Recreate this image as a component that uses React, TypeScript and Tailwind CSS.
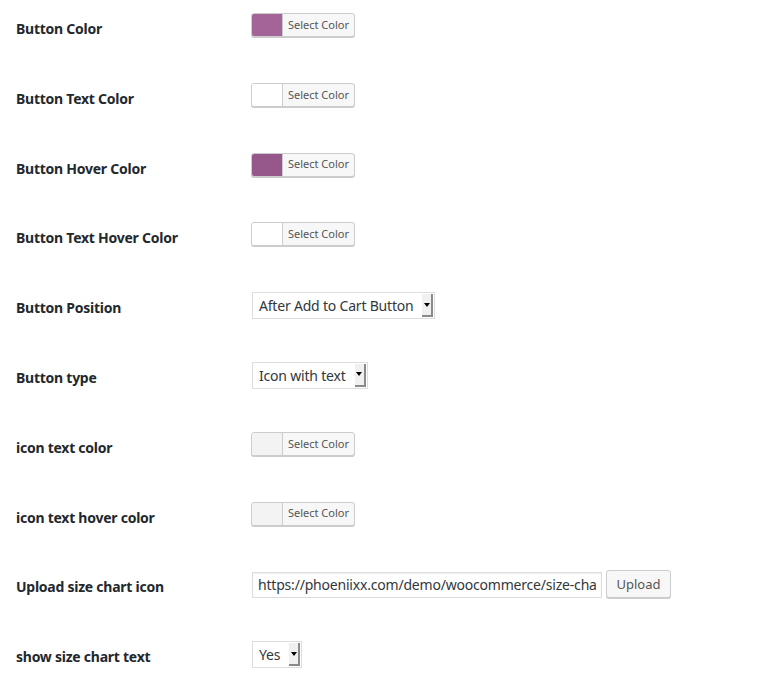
const labelFont = { fontFamily: '"Noto Sans", "Open Sans", sans-serif' };

type Row =
  | { label: string; kind: "color"; swatch: string }
  | { label: string; kind: "select"; value: string }
  | { label: string; kind: "upload"; value: string };

const rows: Row[] = [
  { label: "Button Color", kind: "color", swatch: "bg-[#a46497]" },
  { label: "Button Text Color", kind: "color", swatch: "bg-white" },
  { label: "Button Hover Color", kind: "color", swatch: "bg-[#96588a]" },
  { label: "Button Text Hover Color", kind: "color", swatch: "bg-white" },
  { label: "Button Position", kind: "select", value: "After Add to Cart Button" },
  { label: "Button type", kind: "select", value: "Icon with text" },
  { label: "icon text color", kind: "color", swatch: "bg-[#f3f3f3]" },
  { label: "icon text hover color", kind: "color", swatch: "bg-[#f3f3f3]" },
  {
    label: "Upload size chart icon",
    kind: "upload",
    value: "https://phoeniixx.com/demo/woocommerce/size-chart/wp-content/uploads/2016/icon.png",
  },
  { label: "show size chart text", kind: "select", value: "Yes" },
];

function ColorButton({ swatch }: { swatch: string }) {
  return (
    <div className="ml-[-1px] flex h-[24px] w-[104px] overflow-hidden rounded-[3px] border border-[#cccccc] bg-[#f7f7f7] shadow-[0_1px_0_#cccccc]">
      <span className={`w-[31px] border-r border-[#cccccc] ${swatch}`} />
      <span className="flex flex-1 items-center justify-center text-[11px] text-[#555555]">
        Select Color
      </span>
    </div>
  );
}

function Dropdown({ value }: { value: string }) {
  return (
    <div className="flex h-[27px] items-stretch border border-[#dddddd] bg-white text-[14px] tracking-[-0.2px] text-[#32373c]">
      <span className="flex items-center pl-[6px] pr-[9px]">{value}</span>
      <span className="my-[1px] mr-[1px] flex w-[11px] items-center justify-center border-b-2 border-r-2 border-[#8a8a8a] bg-[#f0f0f0]">
        <span className="h-0 w-0 border-l-[3px] border-r-[3px] border-t-[4px] border-l-transparent border-r-transparent border-t-black" />
      </span>
    </div>
  );
}

function Upload({ value }: { value: string }) {
  return (
    <div className="flex items-center gap-[4px]">
      <input
        readOnly
        value={value}
        className="h-[26px] w-[350px] border border-[#dddddd] bg-white px-[5px] text-[14px] tracking-[-0.2px] text-[#32373c] shadow-[inset_0_1px_2px_rgba(0,0,0,0.07)] outline-none"
        style={labelFont}
      />
      <button className="-mt-[1px] h-[28px] w-[65px] rounded-[3px] border border-[#cccccc] bg-[#f7f7f7] text-[13px] text-[#555555] shadow-[0_1px_0_#cccccc]">
        Upload
      </button>
    </div>
  );
}

export default function App() {
  return (
    <div className="min-h-screen bg-white pt-[13px]" style={labelFont}>
      {rows.map((row) => (
        <div key={row.label} className="flex h-[69.8px] items-start">
          <div className="w-[252px] shrink-0 pl-[16px] pt-[6px] text-[14px] font-bold leading-[20px] tracking-[-0.25px] text-[#23282d]">
            {row.label}
          </div>
          {row.kind === "color" && <ColorButton swatch={row.swatch} />}
          {row.kind === "select" && <Dropdown value={row.value} />}
          {row.kind === "upload" && <Upload value={row.value} />}
        </div>
      ))}
    </div>
  );
}
